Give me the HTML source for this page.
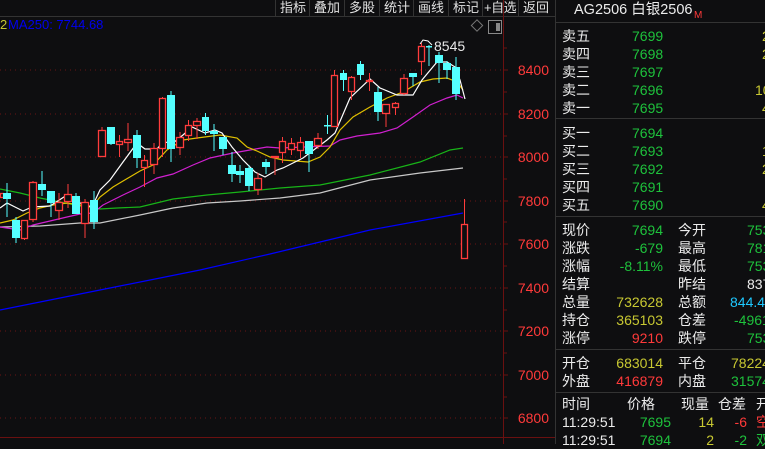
<!DOCTYPE html>
<html><head><meta charset="utf-8"><style>
*{margin:0;padding:0;box-sizing:border-box}
html,body{width:765px;height:444px}
body{background:#0e0e10;overflow:hidden;position:relative;font-family:"Liberation Sans","Noto Sans CJK SC",sans-serif;color:#e8e8e8}
.t{position:absolute;white-space:nowrap;font-size:14px;line-height:18px}
.g{color:#1ec23c}.y{color:#c8c832}.r{color:#ff3a3a}.w{color:#ececec}.c{color:#1ec8ff}
.ra{text-align:right}
.tb{position:absolute;top:0;height:16px;font-size:13px;line-height:15px;color:#e0e0e0;border-left:1px solid #333;padding-left:4px;white-space:nowrap;overflow:hidden}
</style></head><body>
<svg width="765" height="444" style="position:absolute;left:0;top:0">
<line x1="0" y1="16.5" x2="555" y2="16.5" stroke="#333"/>
<g stroke="#6a1414" stroke-dasharray="1,4">
<line x1="0" y1="70" x2="503" y2="70"/><line x1="0" y1="114" x2="503" y2="114"/><line x1="0" y1="157" x2="503" y2="157"/><line x1="0" y1="201" x2="503" y2="201"/><line x1="0" y1="244" x2="503" y2="244"/><line x1="0" y1="288" x2="503" y2="288"/><line x1="0" y1="331" x2="503" y2="331"/><line x1="0" y1="375" x2="503" y2="375"/><line x1="0" y1="418" x2="503" y2="418"/>
</g>
<line x1="503.5" y1="0" x2="503.5" y2="444" stroke="#6a1010"/>
<line x1="0" y1="437.5" x2="555" y2="437.5" stroke="#6a1010"/>
<g stroke="#6a1010"><line x1="503" y1="48" x2="507" y2="48"/><line x1="503" y1="70" x2="508" y2="70"/><line x1="503" y1="92" x2="507" y2="92"/><line x1="503" y1="114" x2="508" y2="114"/><line x1="503" y1="136" x2="507" y2="136"/><line x1="503" y1="157" x2="508" y2="157"/><line x1="503" y1="179" x2="507" y2="179"/><line x1="503" y1="201" x2="508" y2="201"/><line x1="503" y1="222" x2="507" y2="222"/><line x1="503" y1="244" x2="508" y2="244"/><line x1="503" y1="266" x2="507" y2="266"/><line x1="503" y1="288" x2="508" y2="288"/><line x1="503" y1="310" x2="507" y2="310"/><line x1="503" y1="331" x2="508" y2="331"/><line x1="503" y1="353" x2="507" y2="353"/><line x1="503" y1="375" x2="508" y2="375"/><line x1="503" y1="397" x2="507" y2="397"/><line x1="503" y1="418" x2="508" y2="418"/></g>
<g fill="#ff3a3a" font-size="14" font-family="Liberation Sans" text-anchor="end">
<text x="549" y="75">8400</text><text x="549" y="119">8200</text><text x="549" y="162">8000</text><text x="549" y="206">7800</text><text x="549" y="249">7600</text><text x="549" y="293">7400</text><text x="549" y="336">7200</text><text x="549" y="380">7000</text><text x="549" y="423">6800</text>
</g>
<line x1="555.5" y1="0" x2="555.5" y2="444" stroke="#333"/>
<g fill="none" stroke-width="1.2">
<polyline stroke="#0000ff" points="0,310 100,290 200,270 270,254 370,230 463,213"/>
<polyline stroke="#c8c8c8" points="0,227 40,226 80,223 100,223 140,215 173,208 207,203 240,201 280,198 320,193 370,180 420,173 463,168"/>
<polyline stroke="#18b418" points="0,189 20,193 40,198 60,202 80,206 100,209 117,208 140,207 173,199 207,195 240,192 280,188 320,185 370,175 420,162 450,150 463,148"/>
<polyline stroke="#d020d0" points="0,227 20,230 33,225 50,221 67,217 80,214 93,213 103,205 123,195 140,187 157,178 173,174 193,165 210,158 233,153 250,150 267,147 280,148 330,146 340,140 357,136 380,133 397,128 413,117 430,105 447,98 457,95 463,98"/>
<polyline stroke="#e0c000" points="0,223 13,220 27,213 40,208 53,205 67,203 80,205 92,207 100,197 113,187 140,171 153,165 167,150 183,140 197,138 220,135 237,138 247,147 257,151 270,157 283,160 308,162 320,157 330,147 340,130 353,117 370,107 387,98 403,92 420,82 433,79 447,78 457,82 463,90"/>
<polyline stroke="#ffffff" points="0,208 7,203 15,207 23,211 32,207 50,206 67,195 77,202 92,207 100,190 110,180 123,162 137,143 145,149 157,149 163,142 173,143 183,135 192,127 205,133 215,130 222,133 232,147 243,160 255,172 265,177 277,170 283,168 303,158 327,140 335,133 350,98 370,79 380,88 397,95 413,95 422,80 437,62 447,62 455,67 460,80 465,99"/>
</g>
<g id="c"></g>
<polyline points="420,44 423,40 428,41 432,45" fill="none" stroke="#fff"/>
<text x="434" y="51" fill="#e8e8e8" font-size="14" font-family="Liberation Sans">8545</text>
<rect x="473" y="21.5" width="8" height="8" fill="none" stroke="#777" transform="rotate(45 477 25.5)"/>
<rect x="488.5" y="20.5" width="13" height="13" fill="none" stroke="#888"/><rect x="496" y="23" width="4" height="8" fill="#888"/>
<line x1="556" y1="22.5" x2="765" y2="22.5" stroke="#333"/>
<line x1="556" y1="118.5" x2="765" y2="118.5" stroke="#333"/>
<line x1="556" y1="216.5" x2="765" y2="216.5" stroke="#333"/>
<line x1="556" y1="349.5" x2="765" y2="349.5" stroke="#333"/>
<line x1="556" y1="392.5" x2="765" y2="392.5" stroke="#333"/>
</svg>
<div class="tb" style="left:275px;width:34px">指标</div>
<div class="tb" style="left:309px;width:35px">叠加</div>
<div class="tb" style="left:344px;width:35px">多股</div>
<div class="tb" style="left:379px;width:34px">统计</div>
<div class="tb" style="left:413px;width:35px">画线</div>
<div class="tb" style="left:448px;width:34px">标记</div>
<div class="tb" style="left:482px;width:36px;padding-left:1px;letter-spacing:-0.5px">+自选</div>
<div class="tb" style="left:518px;width:37px">返回</div>
<div class="t" style="left:0;top:16px;font-size:13px;color:#c8c832">2</div>
<div class="t" style="left:8px;top:16px;font-size:13px;color:#0000f0">MA250: 7744.68</div>
<div class="t w" style="left:574px;top:0;font-size:14.5px;line-height:20px">AG2506 白银2506</div>
<div class="t r" style="left:694px;top:7px;font-size:10px">M</div>
<div class="t w" style="left:562px;top:27px">卖五</div><div class="t g" style="left:632px;top:27px">7699</div><div class="t y" style="left:762px;top:27px">2</div>
<div class="t w" style="left:562px;top:45px">卖四</div><div class="t g" style="left:632px;top:45px">7698</div><div class="t y" style="left:762px;top:45px">2</div>
<div class="t w" style="left:562px;top:63px">卖三</div><div class="t g" style="left:632px;top:63px">7697</div>
<div class="t w" style="left:562px;top:81px">卖二</div><div class="t g" style="left:632px;top:81px">7696</div><div class="t y" style="left:755px;top:81px">10</div>
<div class="t w" style="left:562px;top:99px">卖一</div><div class="t g" style="left:632px;top:99px">7695</div><div class="t y" style="left:762px;top:99px">4</div>
<div class="t w" style="left:562px;top:124px">买一</div><div class="t g" style="left:632px;top:124px">7694</div>
<div class="t w" style="left:562px;top:142px">买二</div><div class="t g" style="left:632px;top:142px">7693</div><div class="t y" style="left:762px;top:142px">1</div>
<div class="t w" style="left:562px;top:160px">买三</div><div class="t g" style="left:632px;top:160px">7692</div><div class="t y" style="left:762px;top:160px">2</div>
<div class="t w" style="left:562px;top:178px">买四</div><div class="t g" style="left:632px;top:178px">7691</div>
<div class="t w" style="left:562px;top:196px">买五</div><div class="t g" style="left:632px;top:196px">7690</div><div class="t y" style="left:762px;top:196px">4</div>
<div class="t w" style="left:562px;top:221px">现价</div><div class="t g ra" style="left:600px;width:63px;top:221px">7694</div><div class="t w" style="left:678px;top:221px">今开</div><div class="t g" style="left:747px;top:221px">7530</div>
<div class="t w" style="left:562px;top:239px">涨跌</div><div class="t g ra" style="left:600px;width:63px;top:239px">-679</div><div class="t w" style="left:678px;top:239px">最高</div><div class="t g" style="left:747px;top:239px">7810</div>
<div class="t w" style="left:562px;top:257px">涨幅</div><div class="t g ra" style="left:590px;width:73px;top:257px">-8.11%</div><div class="t w" style="left:678px;top:257px">最低</div><div class="t g" style="left:747px;top:257px">7530</div>
<div class="t w" style="left:562px;top:275px">结算</div><div class="t w" style="left:678px;top:275px">昨结</div><div class="t w" style="left:747px;top:275px">8373</div>
<div class="t w" style="left:562px;top:293px">总量</div><div class="t y ra" style="left:590px;width:73px;top:293px">732628</div><div class="t w" style="left:678px;top:293px">总额</div><div class="t c" style="left:730px;top:293px">844.4亿</div>
<div class="t w" style="left:562px;top:311px">持仓</div><div class="t y ra" style="left:590px;width:73px;top:311px">365103</div><div class="t w" style="left:678px;top:311px">仓差</div><div class="t g" style="left:734px;top:311px">-4961</div>
<div class="t w" style="left:562px;top:329px">涨停</div><div class="t r ra" style="left:590px;width:73px;top:329px">9210</div><div class="t w" style="left:678px;top:329px">跌停</div><div class="t g" style="left:747px;top:329px">7530</div>
<div class="t w" style="left:562px;top:354px">开仓</div><div class="t y ra" style="left:590px;width:73px;top:354px">683014</div><div class="t w" style="left:678px;top:354px">平仓</div><div class="t y" style="left:731px;top:354px">782247</div>
<div class="t w" style="left:562px;top:372px">外盘</div><div class="t r ra" style="left:590px;width:73px;top:372px">416879</div><div class="t w" style="left:678px;top:372px">内盘</div><div class="t g" style="left:731px;top:372px">315749</div>
<div class="t w" style="left:562px;top:395px">时间</div><div class="t w" style="left:627px;top:395px">价格</div><div class="t w" style="left:681px;top:395px">现量</div><div class="t w" style="left:718px;top:395px">仓差</div><div class="t w" style="left:756px;top:395px">开</div>
<div class="t w" style="left:562px;top:413px">11:29:51</div><div class="t g ra" style="left:620px;width:51px;top:413px">7695</div><div class="t y ra" style="left:690px;width:24px;top:413px">14</div><div class="t r ra" style="left:720px;width:27px;top:413px">-6</div><div class="t r" style="left:756px;top:413px">空</div>
<div class="t w" style="left:562px;top:431px">11:29:51</div><div class="t g ra" style="left:620px;width:51px;top:431px">7694</div><div class="t y ra" style="left:690px;width:24px;top:431px">2</div><div class="t g ra" style="left:720px;width:27px;top:431px">-2</div><div class="t g" style="left:756px;top:431px">双</div>
<script>
var d=[[0,3,193,197,193,197,'r'],[3,10,193,199,183,217,'c'],[12,19,220,238,217,243,'c'],[21,27,220,238,220,240,'r'],[29,36,182,219,181,222,'r'],[38,45,184,190,171,196,'c'],[47,54,191,203,191,217,'c'],[55,62,202,210,193,220,'r'],[64,71,194,201,184,208,'r'],[72,79,196,214,193,214,'c'],[81,88,202,223,199,238,'r'],[90,97,200,222,191,229,'c'],[98,105,130,156,127,156,'r'],[107,114,127,144,127,145,'c'],[116,122,141,144,135,157,'r'],[124,131,139,142,123,151,'r'],[133,140,135,158,130,168,'c'],[141,147,160,167,155,187,'r'],[150,157,148,164,143,174,'r'],[159,165,98,148,97,157,'r'],[167,174,95,149,91,162,'c'],[176,183,137,147,132,155,'r'],[185,191,125,135,120,141,'r'],[193,200,121,125,118,139,'r'],[202,208,117,131,113,135,'c'],[210,217,131,134,124,151,'c'],[219,226,137,149,137,155,'c'],[228,235,165,174,152,182,'c'],[236,243,171,175,165,183,'c'],[245,252,168,186,165,191,'c'],[254,261,178,189,173,195,'r'],[262,269,162,167,159,174,'c'],[271,278,156,157,156,175,'r'],[279,285,141,152,137,163,'r'],[288,294,143,149,138,155,'r'],[297,303,142,150,137,158,'r'],[305,312,141,154,141,172,'c'],[314,321,138,145,133,149,'r'],[324,330,125,126,115,134,'c'],[331,337,75,126,70,127,'r'],[340,346,73,80,70,91,'c'],[348,354,77,91,76,100,'r'],[357,363,64,75,61,80,'c'],[366,372,80,81,73,91,'r'],[374,381,92,112,87,121,'c'],[382,389,104,113,104,127,'r'],[392,398,103,107,102,115,'r'],[400,407,78,93,74,95,'r'],[409,416,73,77,73,86,'c'],[418,424,46,61,43,75,'r'],[426,431,46,47,45,66,'c'],[435,442,55,63,52,83,'c'],[443,450,63,70,61,79,'c'],[452,459,67,94,57,100,'c'],[461,467,224,258,199,258,'r']];
var s='';d.forEach(function(a){var cx=(a[0]+a[1])/2+.5,col=a[6]=='r'?'#ff3c3c':'#54ffff';
if(a[6]=='r'){s+='<line x1="'+cx+'" y1="'+a[4]+'" x2="'+cx+'" y2="'+a[2]+'" stroke="'+col+'"/><line x1="'+cx+'" y1="'+a[3]+'" x2="'+cx+'" y2="'+a[5]+'" stroke="'+col+'"/><rect x="'+(a[0]+.5)+'" y="'+(a[2]+.5)+'" width="'+(a[1]-a[0])+'" height="'+Math.max(1,a[3]-a[2])+'" fill="#0e0e10" stroke="'+col+'" stroke-width="1.3"/>';}
else s+='<line x1="'+cx+'" y1="'+a[4]+'" x2="'+cx+'" y2="'+a[5]+'" stroke="'+col+'"/><rect x="'+a[0]+'" y="'+a[2]+'" width="'+(a[1]-a[0]+1)+'" height="'+Math.max(1.5,a[3]-a[2])+'" fill="'+col+'"/>';});
document.getElementById('c').innerHTML=s;
</script>
</body></html>
